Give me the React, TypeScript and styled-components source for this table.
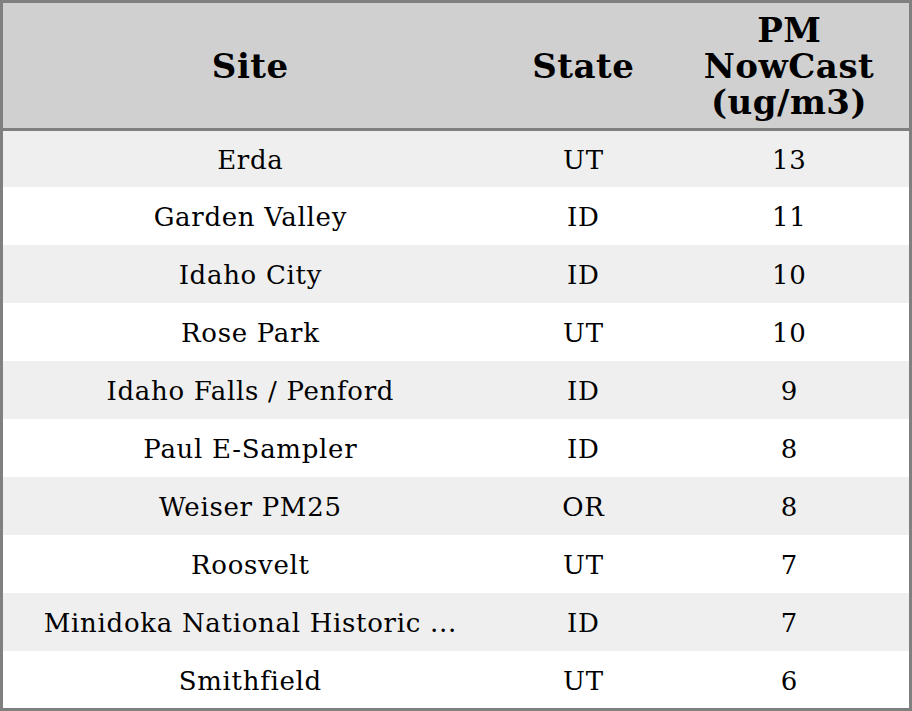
import styled, { createGlobalStyle } from 'styled-components';

const ROWS = [
  { site: 'Erda', state: 'UT', value: 13 },
  { site: 'Garden Valley', state: 'ID', value: 11 },
  { site: 'Idaho City', state: 'ID', value: 10 },
  { site: 'Rose Park', state: 'UT', value: 10 },
  { site: 'Idaho Falls / Penford', state: 'ID', value: 9 },
  { site: 'Paul E-Sampler', state: 'ID', value: 8 },
  { site: 'Weiser PM25', state: 'OR', value: 8 },
  { site: 'Roosvelt', state: 'UT', value: 7 },
  { site: 'Minidoka National Historic ...', state: 'ID', value: 7 },
  { site: 'Smithfield', state: 'UT', value: 6 },
];

export default function App() {
  return (
    <>
      <GlobalStyle />
      <Table>
        <HeaderRow>
          <HeaderCell>Site</HeaderCell>
          <HeaderCell>State</HeaderCell>
          <HeaderCell>
            PM
            <br />
            NowCast
            <br />
            (ug/m3)
          </HeaderCell>
        </HeaderRow>
        <Body>
          {ROWS.map((row, i) => (
            <Row key={row.site} $striped={i % 2 === 0}>
              <Cell>{row.site}</Cell>
              <Cell>{row.state}</Cell>
              <Cell>{row.value}</Cell>
            </Row>
          ))}
        </Body>
      </Table>
    </>
  );
}

const GlobalStyle = createGlobalStyle`
  html, body {
    margin: 0;
    padding: 0;
    background: #ffffff;
  }
  body {
    font-family: 'DejaVu Serif', 'Liberation Serif', serif;
    color: #000;
  }
`;

const COLUMNS = '494px 172px 240px';

const Table = styled.div`
  width: 912px;
  height: 711px;
  box-sizing: border-box;
  border: 3px solid #808080;
  display: flex;
  flex-direction: column;
  overflow: hidden;
`;

const HeaderRow = styled.div`
  display: grid;
  grid-template-columns: ${COLUMNS};
  height: 128px;
  background: #d0d0d0;
  border-bottom: 3px solid #808080;
  box-sizing: border-box;
`;

const HeaderCell = styled.div`
  display: flex;
  align-items: center;
  justify-content: center;
  text-align: center;
  font-size: 34px;
  font-weight: bold;
  line-height: 36px;
  letter-spacing: 0.5px;
  text-indent: 0.5px;
`;

const Body = styled.div`
  display: grid;
  grid-template-rows: 56px repeat(8, 58px) 57px;
`;

const Row = styled.div<{ $striped: boolean }>`
  display: grid;
  grid-template-columns: ${COLUMNS};
  background: ${(p) => (p.$striped ? '#efefef' : '#ffffff')};
`;

const Cell = styled.div`
  display: flex;
  align-items: center;
  justify-content: center;
  font-size: 26px;
  letter-spacing: 0.7px;
  text-indent: 0.7px;
  white-space: nowrap;
  padding-top: 2px;
`;
